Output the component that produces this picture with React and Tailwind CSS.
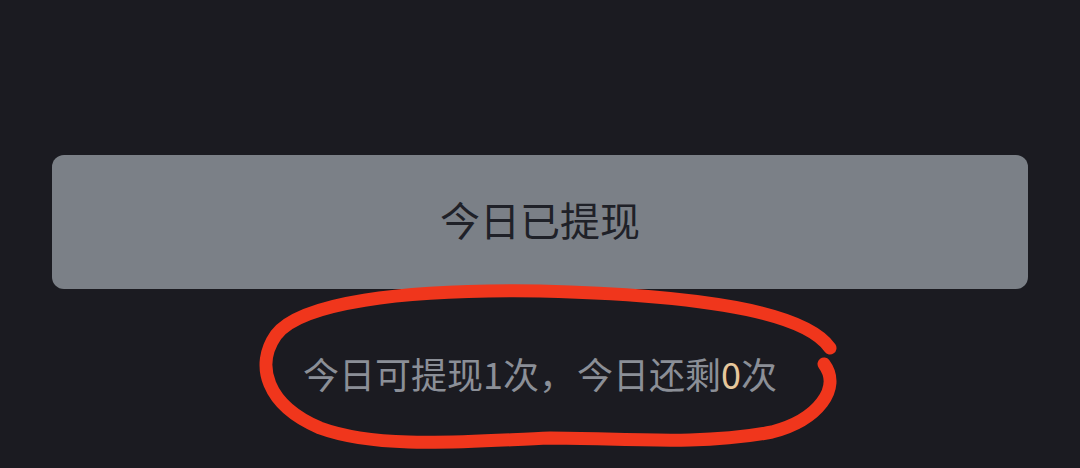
import React from 'react';

export default function App() {
    return (
        <div
            className="relative w-[1080px] h-[468px] overflow-hidden bg-[#1b1b21]"
            style={{ fontFamily: '"Noto Sans CJK SC", "Noto Sans", sans-serif' }}
        >
            <div className="flex flex-col pt-[155px] px-[52px]">
                <button className="h-[134px] w-full rounded-[12px] bg-[#7b8087] text-[40px] leading-none text-[#1f2128] flex items-center justify-center pb-[6px]">
                    今日已提现
                </button>
                <div className="h-[172px] flex items-center justify-center text-[36px] leading-none text-[#8b8f97] pb-[4px]">
                    <span>
                        今日可提现1次<span className="tracking-[-6px]">，</span> 今日还剩<span className="text-[#e6c79c]">0</span>次
                    </span>
                </div>
            </div>

            {/* hand-drawn annotation */}
            <svg className="absolute inset-0 pointer-events-none" width="1080" height="468" viewBox="0 0 1080 468">
                <path
                    d="M 830 348 C 805 312, 700 295, 540 291 C 400 289, 300 303, 276 335 C 255 365, 266 405, 320 428 C 380 450, 470 441, 550 438 C 620 438, 700 446, 772 432 C 818 420, 842 388, 824 364"
                    fill="none"
                    stroke="#f0361c"
                    strokeWidth="13"
                    strokeLinecap="round"
                />
            </svg>
        </div>
    );
}
